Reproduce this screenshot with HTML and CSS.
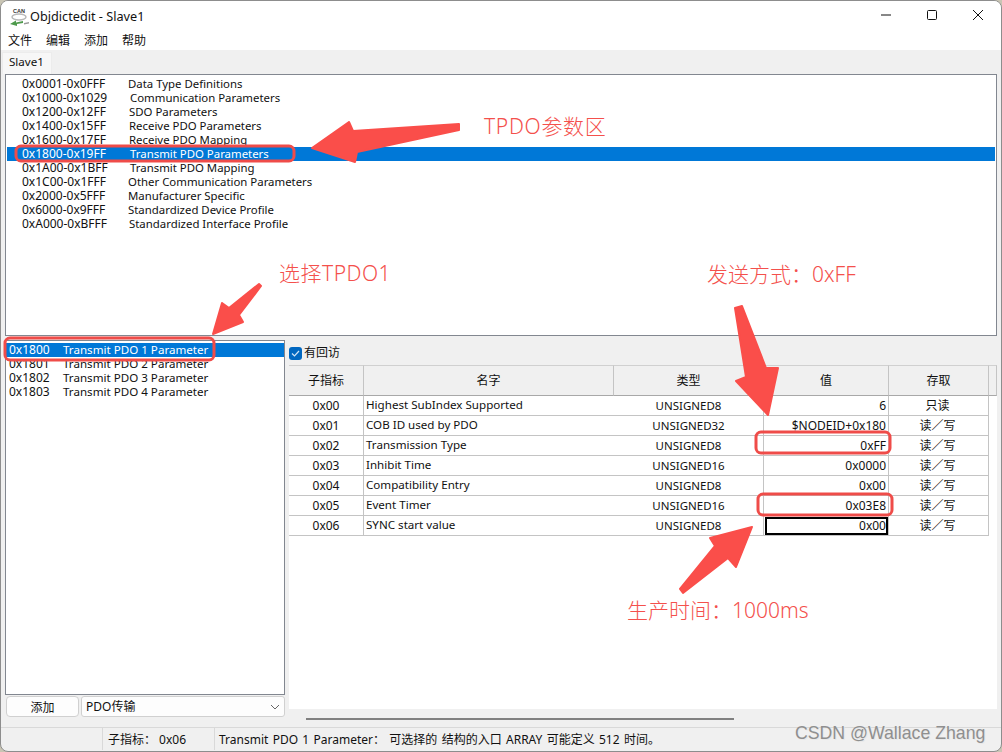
FILE: index.html
```html
<!DOCTYPE html>
<html lang="zh">
<head>
<meta charset="utf-8">
<title>Objdictedit - Slave1</title>
<link rel="stylesheet" href="styles.css">
</head>
<body>
<div class="window">
  <header class="titlebar">
    <svg class="app-icon" width="22" height="24" viewBox="0 0 22 24">
      <text x="5" y="10" class="logo-text">CAN</text>
      <ellipse cx="11" cy="14" rx="7" ry="3" fill="none" stroke="#b9b9b9" stroke-width="1.5"/>
      <path d="M2 21 L8 17.5 L8 19.5 L15 18 L15 20 L9 21 L9 23 Z" fill="#4e9a4c"/>
      <path d="M16 20 L21 19 L21 20.5 L16 21.5 Z" fill="#9a9a9a"/>
    </svg>
    <span class="title">Objdictedit - Slave1</span>
    <div class="window-controls">
      <svg width="12" height="12" viewBox="0 0 12 12"><path d="M1 6H11" stroke="#111" stroke-width="1"/></svg>
      <svg width="12" height="12" viewBox="0 0 12 12"><rect x="1.5" y="1.5" width="9" height="9" rx="1" fill="none" stroke="#111"/></svg>
      <svg width="12" height="12" viewBox="0 0 12 12"><path d="M1 1L11 11M11 1L1 11" stroke="#111"/></svg>
    </div>
  </header>
  <nav class="menubar"><span>文件</span><span>编辑</span><span>添加</span><span>帮助</span></nav>
  <div class="content">
    <div class="tabs"><div class="tab">Slave1</div></div>
    <ul class="list ranges">
      <li><span class="code">0x0001-0x0FFF</span><span class="name">Data Type Definitions</span></li>
      <li><span class="code">0x1000-0x1029</span><span class="name shift2">Communication Parameters</span></li>
      <li><span class="code">0x1200-0x12FF</span><span class="name shift1">SDO Parameters</span></li>
      <li><span class="code">0x1400-0x15FF</span><span class="name shift1">Receive PDO Parameters</span></li>
      <li><span class="code">0x1600-0x17FF</span><span class="name shift1">Receive PDO Mapping</span></li>
      <li class="selected"><span class="code">0x1800-0x19FF</span><span class="name shift2">Transmit PDO Parameters</span></li>
      <li><span class="code">0x1A00-0x1BFF</span><span class="name shift2">Transmit PDO Mapping</span></li>
      <li><span class="code">0x1C00-0x1FFF</span><span class="name">Other Communication Parameters</span></li>
      <li><span class="code">0x2000-0x5FFF</span><span class="name">Manufacturer Specific</span></li>
      <li><span class="code">0x6000-0x9FFF</span><span class="name">Standardized Device Profile</span></li>
      <li><span class="code">0xA000-0xBFFF</span><span class="name shift1">Standardized Interface Profile</span></li>
    </ul>
    <div class="split">
      <aside class="left">
        <ul class="list indexes">
          <li class="selected"><span class="idx">0x1800</span><span class="pname">Transmit PDO 1 Parameter</span></li>
          <li><span class="idx">0x1801</span><span class="pname">Transmit PDO 2 Parameter</span></li>
          <li><span class="idx">0x1802</span><span class="pname">Transmit PDO 3 Parameter</span></li>
          <li><span class="idx">0x1803</span><span class="pname">Transmit PDO 4 Parameter</span></li>
        </ul>
        <div class="add-row">
          <button class="add-btn">添加</button>
          <div class="combo"><span>PDO传输</span>
            <svg width="10" height="6" viewBox="0 0 10 6"><path d="M1 1L5 5L9 1" fill="none" stroke="#666"/></svg>
          </div>
        </div>
      </aside>
      <section class="right">
        <label class="check-row">
          <span class="checkbox"><svg width="13" height="13" viewBox="0 0 13 13"><path d="M3 6.5L5.5 9L10 4" fill="none" stroke="#cfe3f5" stroke-width="1.2"/></svg></span>
          有回访
        </label>
        <div class="grid-wrap">
          <table class="grid">
            <colgroup><col class="c1"><col class="c2"><col class="c3"><col class="c4"><col class="c5"><col class="c6"></colgroup>
            <thead><tr><th>子指标</th><th>名字</th><th>类型</th><th>值</th><th>存取</th><th></th></tr></thead>
            <tbody>
              <tr><td class="ctr">0x00</td><td class="nm">Highest SubIndex Supported</td><td class="ctr type">UNSIGNED8</td><td class="val">6</td><td class="ctr acc">只读</td></tr>
              <tr><td class="ctr">0x01</td><td class="nm">COB ID used by PDO</td><td class="ctr type">UNSIGNED32</td><td class="val">$NODEID+0x180</td><td class="ctr acc">读／写</td></tr>
              <tr><td class="ctr">0x02</td><td class="nm">Transmission Type</td><td class="ctr type">UNSIGNED8</td><td class="val">0xFF</td><td class="ctr acc">读／写</td></tr>
              <tr><td class="ctr">0x03</td><td class="nm">Inhibit Time</td><td class="ctr type">UNSIGNED16</td><td class="val">0x0000</td><td class="ctr acc">读／写</td></tr>
              <tr><td class="ctr">0x04</td><td class="nm">Compatibility Entry</td><td class="ctr type">UNSIGNED8</td><td class="val">0x00</td><td class="ctr acc">读／写</td></tr>
              <tr><td class="ctr">0x05</td><td class="nm">Event Timer</td><td class="ctr type">UNSIGNED16</td><td class="val">0x03E8</td><td class="ctr acc">读／写</td></tr>
              <tr><td class="ctr">0x06</td><td class="nm">SYNC start value</td><td class="ctr type">UNSIGNED8</td><td class="val current">0x00</td><td class="ctr acc">读／写</td></tr>
            </tbody>
          </table>
        </div>
        <div class="hscroll"><div class="thumb"></div></div>
      </section>
    </div>
  </div>
  <footer class="statusbar">
    <div class="st st1"></div>
    <div class="st st2">子指标：&nbsp;0x06</div>
    <div class="st st3">Transmit PDO 1 Parameter：&nbsp;可选择的 结构的入口 ARRAY 可能定义 512 时间。</div>
  </footer>

  <svg class="overlay" width="1002" height="752" viewBox="0 0 1002 752">
    <g class="boxes">
      <rect x="16" y="146" width="278" height="15" rx="5"/>
      <rect x="5" y="338" width="209" height="22" rx="5"/>
      <rect x="756" y="432" width="134" height="21" rx="5"/>
      <rect x="758" y="494" width="134" height="21" rx="5"/>
    </g>
    <g class="arrows">
      <polygon points="459,124 353,131 349,122 312,148 355,162 357,152 459,130"/>
      <polygon points="259,284 261,286 239,315 243,322 213,334 222,303 229,308"/>
      <polygon points="735,308 742,306 766,368 778,368 768,415 736,381 746,377"/>
      <polygon points="752,527 710,538 715,546 680,589 683,593 728,558 736,567"/>
    </g>
  </svg>
  <div class="note note-a">TPDO参数区</div>
  <div class="note note-b">选择TPDO1</div>
  <div class="note note-c">发送方式：0xFF</div>
  <div class="note note-d">生产时间：1000ms</div>
  <div class="watermark">CSDN @Wallace Zhang</div>
</div>
</body>
</html>
```
FILE: styles.css
```css
* { box-sizing: border-box; }
html, body { margin: 0; padding: 0; height: 100%; overflow: hidden; background: #c9c5b4; }
body { font: 12px/14px "Noto Sans", "Noto Sans CJK SC", sans-serif; color: #111; }

.window {
  position: relative;
  width: 1002px;
  height: 752px;
  display: flex;
  flex-direction: column;
  background: #f0f0f0;
  border: 1px solid #8d8d8d;
  border-radius: 8px;
  overflow: hidden;
}

.titlebar { height: 27px; flex: none; display: flex; align-items: center; background: #fff; padding: 0 0 0 7px; }
.app-icon { flex: none; margin-top: 1px; }
.logo-text { font: 700 5.5px "Liberation Sans", sans-serif; fill: #333; }
.title { font-size: 12.7px; margin-top: 2px; color: #111; }
.window-controls { margin-left: auto; display: flex; gap: 34px; padding-right: 17px; align-items: center; }

.menubar { height: 22px; flex: none; display: flex; align-items: center; gap: 14px; padding: 3px 0 0 7px; background: #fff; }

.content { flex: 1; display: flex; flex-direction: column; padding: 0 4px; min-height: 0; }
.tabs { height: 24px; flex: none; display: flex; align-items: flex-end; margin-left: -3px; }
.tab { width: 50px; height: 22px; padding: 2px 0 0 6px; font-size: 11.6px; background: #f7f7f7; border: 1px solid #ececec; border-bottom: 0; }

.list { list-style: none; margin: 0; background: #fff; border: 1px solid #828790; }
.list li { height: 14px; white-space: pre; color: #111; display: flex; }
.list li.selected { background: #0078d7; color: #fff; }
.ranges { height: 262px; flex: none; padding: 2px 1px 0 1px; }
.ranges li { padding-left: 15px; }
.code { width: 106px; flex: none; }
.name { font-size: 11.4px; }
.shift1 { margin-left: 1px; }
.shift2 { margin-left: 2px; }

.split { flex: 1; display: flex; min-height: 0; margin-top: 4px; }
.left { width: 280px; flex: none; display: flex; flex-direction: column; }
.indexes { flex: 1; padding: 2px 0 0 0; }
.indexes li { padding-left: 3px; }
.idx { width: 54px; flex: none; }
.pname { font-size: 11.6px; }
.add-row { height: 24px; flex: none; display: flex; gap: 2px; padding: 1px 0 0 1px; margin-bottom: 8px; }
.add-btn { width: 73px; height: 21px; padding: 0; font: 12px "Noto Sans CJK SC", sans-serif; color: #111; background: #fdfdfd; border: 1px solid #d0d0d0; border-radius: 4px; }
.combo { flex: 1; height: 21px; display: flex; align-items: center; justify-content: space-between; padding: 0 4px; background: #fdfdfd; border: 1px solid #d0d0d0; border-radius: 3px; }

.right { flex: 1; margin-left: 4px; display: flex; flex-direction: column; min-width: 0; }
.check-row { height: 25px; flex: none; display: flex; align-items: center; gap: 2px; padding: 1px 0 0 0; }
.checkbox { width: 13px; height: 13px; border-radius: 3px; background: #0067c0; display: block; }
.checkbox svg { display: block; }

.grid-wrap { height: 344px; flex: none; background: #fff; }
.grid { table-layout: fixed; border-collapse: separate; border-spacing: 0; width: 708px; font-size: 12px; }
.c1 { width: 75px; } .c2 { width: 250px; } .c3 { width: 150px; } .c4 { width: 125px; } .c5 { width: 100px; } .c6 { width: 8px; }
.grid th { height: 31px; padding: 0; font-weight: 400; background: #f0f0f0; border-right: 1px solid #c4c4c4; border-bottom: 1px solid #a8a8a8; border-top: 1px solid #d0d0d0; }
.grid td { height: 20px; padding: 0 2px; background: #fff; border-bottom: 1px solid #c4c4c4; white-space: nowrap; }
.grid .ctr { text-align: center; }
.grid td:nth-child(1), .grid td:nth-child(3), .grid td:nth-child(4), .grid td:nth-child(5) { border-right: 1px solid #c4c4c4; }
.grid .nm { font-size: 11.6px; padding-bottom: 2px; }
.grid .type { font-size: 11.5px; padding-right: 2px; }
.grid .val { text-align: right; }
.grid .acc { padding-right: 4px; padding-top: 1px; }
.grid .current { outline: 2px solid #000; outline-offset: -3px; }

.hscroll { height: 16px; flex: none; display: flex; align-items: center; padding-left: 17px; }
.thumb { width: 428px; height: 2px; background: #808080; margin-top: 3px; }

.statusbar { height: 23px; flex: none; display: flex; align-items: center; border-top: 1px solid #d9d9d9; margin-bottom: 1px; }
.st { height: 100%; padding: 5px 0 0 5px; }
.st1 { width: 101px; }
.st2 { width: 112px; border-left: 1px solid #d9d9d9; }
.st3 { flex: 1; border-left: 1px solid #d9d9d9; padding-left: 4px; word-spacing: 1.2px; }

.overlay { position: absolute; left: -1px; top: -1px; pointer-events: none; }
.boxes rect { fill: none; stroke: #ef4c49; stroke-width: 3; }
.arrows polygon { fill: #fa4e4a; stroke: #fa4e4a; stroke-width: 2; stroke-linejoin: round; }

.note { position: absolute; font: 300 21px/26px "Noto Sans", "Noto Sans CJK SC", sans-serif; color: #f4504c; white-space: nowrap; }
.note-a { left: 483px; top: 112px; letter-spacing: .7px; }
.note-b { left: 278px; top: 259px; letter-spacing: .5px; }
.note-c { left: 706px; top: 260px; }
.note-d { left: 626px; top: 596px; }
.watermark { position: absolute; left: 794px; top: 719px; font: 17.7px/26px "Liberation Sans", sans-serif; color: #8f8f8f; text-shadow: 1px 1px 0 #e8e8e8; white-space: nowrap; }
```
